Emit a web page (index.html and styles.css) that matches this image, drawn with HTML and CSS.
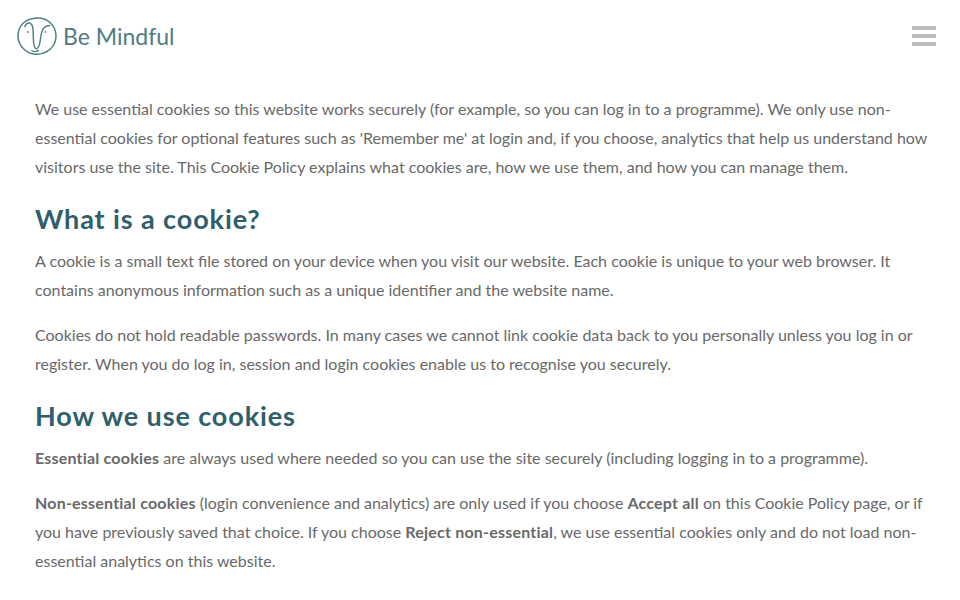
FILE: index.html
```html
<!DOCTYPE html>
<html lang="en">
<head>
<meta charset="utf-8">
<title>Cookie Policy</title>
<link rel="stylesheet" href="styles.css">
</head>
<body>
<header class="site-header">
  <a class="logo" href="#">
    <svg class="logo-mark" viewBox="0 0 40 38" width="40" height="38" aria-hidden="true">
      <path d="M20 1C30 .6 39 8 39 19c0 10-8 18-19 18.300C10 37.500 1 29 1 19 1 8 9 1.400 20 1Z" fill="none" stroke="#4f8285" stroke-width="1.500"/>
      <path d="M7.700 10c1-3 3-4.200 4.500-4 2.500.4 3.500 3 3.800 6 .4 4 .1 9 .6 13 .3 3 1.300 6.700 2.700 6.700 2 0 3.500-5 4-8.700.5-3.500.8-7 2.200-10 1.500-3 4-4.500 7.800-4.500" fill="none" stroke="#4f8285" stroke-width="1.500"/>
      <path d="M14.300 33c1.500 2.200 5.500 2.200 7.400 0" fill="none" stroke="#4f8285" stroke-width="1.300"/>
      <circle cx="11" cy="15" r="1" fill="#7f8f8c"/>
      <circle cx="28.300" cy="15" r="1" fill="#a07f7c"/>
    </svg>
    <span class="logo-text">Be Mindful</span>
  </a>
  <button class="menu-toggle" aria-label="Menu">
    <span class="bar"></span><span class="bar"></span><span class="bar"></span>
  </button>
</header>
<main class="content">
  <p>We use essential cookies so this website works securely (for example, so you can log in to a programme). We only use non-essential cookies for optional features such as 'Remember me' at login and, if you choose, analytics that help us understand how visitors use the site. This Cookie Policy explains what cookies are, how we use them, and how you can manage them.</p>
  <h2>What is a cookie?</h2>
  <p>A cookie is a small text file stored on your device when you visit our website. Each cookie is unique to your web browser. It contains anonymous information such as a unique identifier and the website name.</p>
  <p>Cookies do not hold readable passwords. In many cases we cannot link cookie data back to you personally unless you log in or register. When you do log in, session and login cookies enable us to recognise you securely.</p>
  <h2>How we use cookies</h2>
  <p><strong>Essential cookies</strong> are always used where needed so you can use the site securely (including logging in to a programme).</p>
  <p><strong>Non-essential cookies</strong> (login convenience and analytics) are only used if you choose <strong>Accept all</strong> on this Cookie Policy page, or if you have previously saved that choice. If you choose <strong>Reject non-essential</strong>, we use essential cookies only and do not load non-essential analytics on this website.</p>
</main>
</body>
</html>
```
FILE: styles.css
```css
* { box-sizing: border-box; }
html, body { margin: 0; padding: 0; }
body {
  background: #fff;
  color: #696969;
  font-family: "Lato", "Liberation Sans", sans-serif;
  font-size: 16px;
  line-height: 28.8px;
  overflow: hidden;
  height: 600px;
}
.site-header {
  display: flex;
  justify-content: space-between;
  align-items: center;
  height: 72px;
  padding: 0 24px 0 17px;
}
.logo {
  display: flex;
  align-items: center;
  gap: 6px;
  text-decoration: none;
}
.logo-text {
  font-size: 23px;
  font-weight: 400;
  color: #4f7d80;
  line-height: 1;
}
.menu-toggle {
  display: flex;
  flex-direction: column;
  gap: 4px;
  width: 24px;
  padding: 0;
  border: 0;
  background: none;
}
.bar {
  display: block;
  width: 24px;
  height: 4px;
  background: #bbb;
}
.content {
  padding: 23px 33px 0 35px;
}
p { margin: 0 0 16px; }
h2 {
  margin: 20.8px 0 11px;
  font-size: 27px;
  line-height: 34px;
  font-weight: 700;
  color: #2f5f6b;
  letter-spacing: .9px;
}
strong { font-weight: 700; letter-spacing: .2px; }
```
